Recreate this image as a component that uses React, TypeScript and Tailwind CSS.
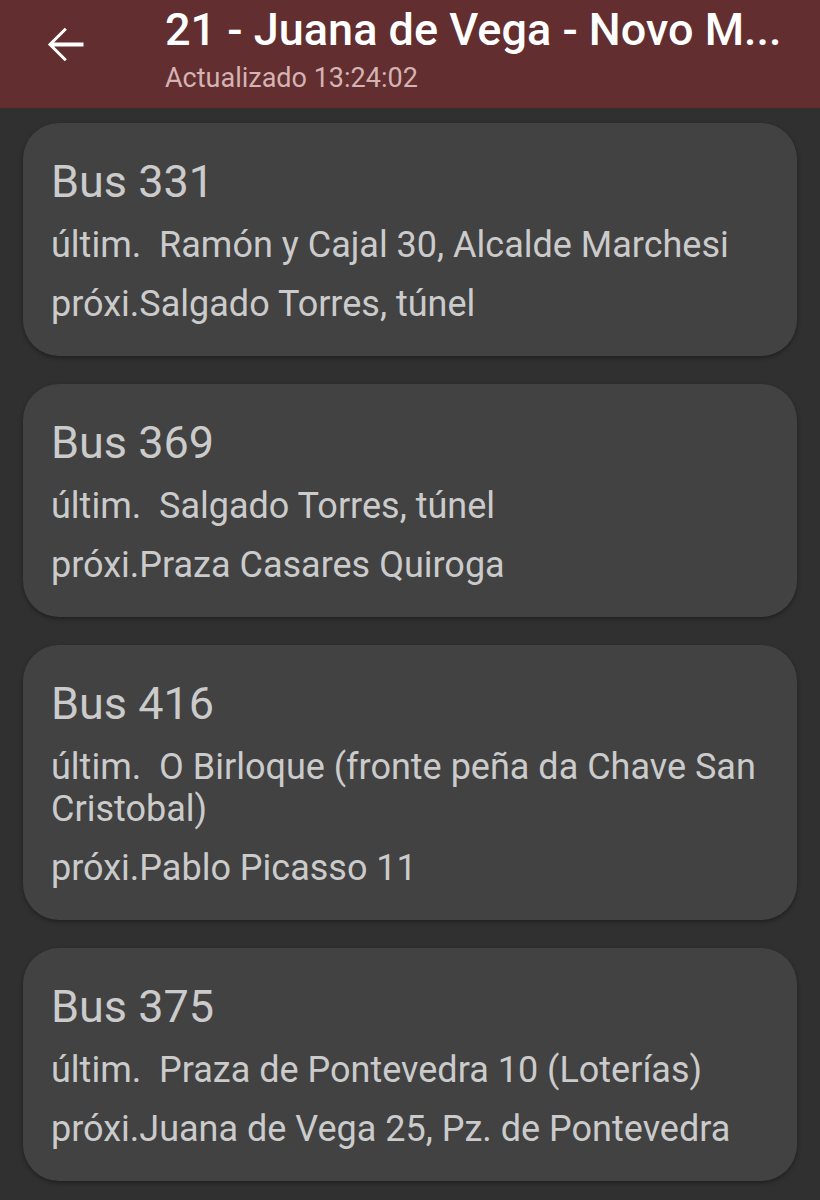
import React from "react";

const buses = [
  { bus: "Bus 331", last: "Ramón y Cajal 30, Alcalde Marchesi", next: "Salgado Torres, túnel" },
  { bus: "Bus 369", last: "Salgado Torres, túnel", next: "Praza Casares Quiroga" },
  { bus: "Bus 416", last: "O Birloque (fronte peña da Chave San Cristobal)", next: "Pablo Picasso 11" },
  { bus: "Bus 375", last: "Praza de Pontevedra 10 (Loterías)", next: "Juana de Vega 25, Pz. de Pontevedra" },
];

export default function App() {
  return (
    <div className="w-[820px] h-[1200px] bg-[#303030] overflow-hidden" style={{ fontFamily: "Roboto, 'Noto Sans', sans-serif" }}>
      <header className="h-[108px] bg-[#622e30] flex items-start">
        <div className="w-[165px] shrink-0 pt-[16px] pl-[36px]">
          <svg width="57" height="57" viewBox="0 0 24 24" fill="#ffffff">
            <path d="M20 11.2H7.6l5.4-5.4L12.1 4.9 5 12l7.1 7.1.9-.9-5.4-5.4H20v-1.6z" />
          </svg>
        </div>
        <div className="min-w-0 flex-1 pt-[4px]">
          <div className="text-white text-[45px] leading-[52px] font-medium whitespace-nowrap">21 - Juana de Vega - Novo M...</div>
          <div className="text-[#d6b3b3] text-[27px] leading-[32px] mt-[6px]">Actualizado 13:24:02</div>
        </div>
      </header>
      <main className="px-[23px] pt-[15px] flex flex-col gap-[28px]">
        {buses.map((b) => (
          <div key={b.bus} className="bg-[#424242] rounded-[36px] pl-[28px] pr-[24px] pt-[34px] pb-[31px] shadow-[0_2px_4px_rgba(0,0,0,0.35)] text-[#cbcbcb]">
            <div className="text-[45px] leading-[50px]">{b.bus}</div>
            <div className="text-[36px] leading-[42px] mt-[17px] whitespace-pre-wrap">{"últim.  " + b.last}</div>
            <div className="text-[36px] leading-[42px] mt-[17px]">{"próxi." + b.next}</div>
          </div>
        ))}
      </main>
    </div>
  );
}
